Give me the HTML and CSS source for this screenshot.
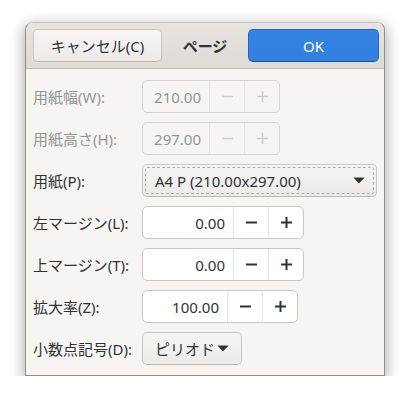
FILE: index.html
```html
<!DOCTYPE html>
<html lang="ja">
<head>
<meta charset="utf-8">
<link rel="stylesheet" href="styles.css">
</head>
<body>
<div class="dialog">
  <div class="header">
    <button class="btn cancel">キャンセル(C)</button>
    <div class="title">ページ</div>
    <button class="btn ok">OK</button>
  </div>
  <div class="body">
    <div class="label disabled">用紙幅(W):</div>
    <div class="spin dis w-a">
      <div class="entry">210.00</div>
      <div class="sbtn"><svg width="11" height="11" viewBox="0 0 11 11"><path d="M0 5.5h11" stroke="currentColor" stroke-width="1.6"/></svg></div>
      <div class="sbtn"><svg width="11" height="11" viewBox="0 0 11 11"><path d="M0 5.5h11M5.5 0v11" stroke="currentColor" stroke-width="1.6"/></svg></div>
    </div>

    <div class="label disabled">用紙高さ(H):</div>
    <div class="spin dis w-a">
      <div class="entry">297.00</div>
      <div class="sbtn"><svg width="11" height="11" viewBox="0 0 11 11"><path d="M0 5.5h11" stroke="currentColor" stroke-width="1.6"/></svg></div>
      <div class="sbtn"><svg width="11" height="11" viewBox="0 0 11 11"><path d="M0 5.5h11M5.5 0v11" stroke="currentColor" stroke-width="1.6"/></svg></div>
    </div>

    <div class="label">用紙(P):</div>
    <div class="combo">
      <span>A4 P (210.00x297.00)</span>
      <svg class="arrow" width="12" height="7" viewBox="0 0 12 7"><path d="M0.5 0.5h11L6 6.5z" fill="#2e3436"/></svg>
    </div>

    <div class="label">左マージン(L):</div>
    <div class="spin w-b">
      <div class="entry">0.00</div>
      <div class="sbtn"><svg width="11" height="11" viewBox="0 0 11 11"><path d="M0 5.5h11" stroke="currentColor" stroke-width="2"/></svg></div>
      <div class="sbtn"><svg width="11" height="11" viewBox="0 0 11 11"><path d="M0 5.5h11M5.5 0v11" stroke="currentColor" stroke-width="2"/></svg></div>
    </div>

    <div class="label">上マージン(T):</div>
    <div class="spin w-b">
      <div class="entry">0.00</div>
      <div class="sbtn"><svg width="11" height="11" viewBox="0 0 11 11"><path d="M0 5.5h11" stroke="currentColor" stroke-width="2"/></svg></div>
      <div class="sbtn"><svg width="11" height="11" viewBox="0 0 11 11"><path d="M0 5.5h11M5.5 0v11" stroke="currentColor" stroke-width="2"/></svg></div>
    </div>

    <div class="label">拡大率(Z):</div>
    <div class="spin w-c">
      <div class="entry">100.00</div>
      <div class="sbtn"><svg width="11" height="11" viewBox="0 0 11 11"><path d="M0 5.5h11" stroke="currentColor" stroke-width="2"/></svg></div>
      <div class="sbtn"><svg width="11" height="11" viewBox="0 0 11 11"><path d="M0 5.5h11M5.5 0v11" stroke="currentColor" stroke-width="2"/></svg></div>
    </div>

    <div class="label">小数点記号(D):</div>
    <div class="drop">
      <span>ピリオド</span>
      <svg class="arrow" width="12" height="7" viewBox="0 0 12 7"><path d="M0.5 0.5h11L6 6.5z" fill="#2e3436"/></svg>
    </div>
  </div>
</div>
</body>
</html>
```

FILE: styles.css
```css
html, body {
  margin: 0;
  padding: 0;
  background: #ffffff;
}
body {
  font-family: "Noto Sans", "Noto Sans CJK JP", sans-serif;
  font-size: 15px;
  color: #2e3436;
}
.dialog {
  margin: 22px 0 0 25px;
  width: 360px;
  height: 354px;
  box-sizing: border-box;
  border: 1px solid #8e8e8c;
  border-top-color: #c9c5c1;
  border-radius: 8px 8px 0 0;
  background: #f6f5f4;
  box-shadow: 0 4px 14px 2px rgba(0,0,0,0.3);
  display: flex;
  flex-direction: column;
  overflow: hidden;
}
.header {
  height: 46px;
  box-sizing: border-box;
  padding: 6px 5px 6px 7px;
  display: flex;
  align-items: stretch;
  background: linear-gradient(#e6e3e0, #dfdbd7);
  border-bottom: 1px solid #c0bab4;
  border-radius: 7px 7px 0 0;
}
.btn {
  font: inherit;
  height: 33px;
  box-sizing: border-box;
  border-radius: 5px;
  padding: 0;
}
.cancel {
  width: 129px;
  color: #2e3436;
  background: linear-gradient(#f6f5f4, #edebe9);
  border: 1px solid #cdc7c2;
  border-bottom-color: #bfb8b1;
}
.title {
  flex: 1;
  display: flex;
  align-items: center;
  justify-content: center;
  font-weight: bold;
  color: #2e3436;
}
.ok {
  width: 131px;
  color: #ffffff;
  background: linear-gradient(#3584e4, #3180e0);
  border: 1px solid #1b6acb;
  border-bottom-color: #15539e;
}
.body {
  padding: 11px 7px 0 7px;
  display: grid;
  grid-template-columns: 103px auto;
  column-gap: 6px;
  row-gap: 9px;
  grid-auto-rows: 33px;
  align-items: center;
}
.label {
  white-space: nowrap;
}
.label.disabled {
  color: #929595;
}
.spin {
  height: 33px;
  box-sizing: border-box;
  display: flex;
  background: #ffffff;
  border: 1px solid #cdc7c2;
  border-radius: 5px;
  justify-self: start;
}
.spin .entry {
  flex: 1;
  display: flex;
  align-items: center;
  justify-content: flex-end;
  padding-right: 8px;
  color: #2e3436;
}
.spin .sbtn {
  width: 34px;
  border-left: 1px solid #e6e3e0;
  display: flex;
  align-items: center;
  justify-content: center;
  color: #2e3436;
}
.sbtn svg {
  display: block;
}
.spin.dis {
  background: #f6f5f4;
  border-color: #d8d4d0;
}
.spin.dis .entry {
  color: #929595;
}
.spin.dis .sbtn {
  color: #cfcdca;
  border-left-color: #e6e3e0;
}
.w-a { width: 138px; }
.w-b { width: 162px; }
.w-c { width: 156px; }
.combo, .drop {
  height: 33px;
  box-sizing: border-box;
  display: flex;
  align-items: center;
  justify-content: space-between;
  background: linear-gradient(#f6f5f4, #edebe9);
  border: 1px solid #cdc7c2;
  border-bottom-color: #bfb8b1;
  border-radius: 5px;
  color: #2e3436;
  justify-self: start;
  white-space: nowrap;
}
.combo {
  width: 235px;
  padding: 0 11px 0 12px;
  outline: 1px dashed rgba(46,52,54,0.35);
  outline-offset: -4px;
}
.drop {
  width: 100px;
  padding: 0 12px 0 12px;
}
.arrow {
  display: block;
  flex: none;
}
```
